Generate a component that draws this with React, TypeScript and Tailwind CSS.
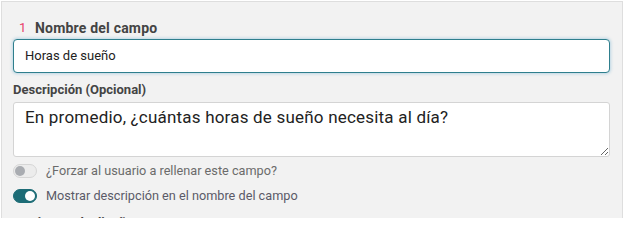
import { useState } from 'react';

function Toggle({ on }: { on: boolean }) {
  return (
    <span
      className={`relative inline-flex h-[14px] w-[24px] flex-shrink-0 items-center rounded-full border ${
        on ? 'border-[#1d6c76] bg-[#1d6c76]' : 'border-[#d6d6d6] bg-[#ececec]'
      }`}
    >
      <span
        className={`absolute top-[1px] h-[10px] w-[10px] rounded-full ${
          on ? 'right-[1px] bg-white' : 'left-[1px] bg-[#a9acb1]'
        }`}
      />
    </span>
  );
}

export default function App() {
  const [name, setName] = useState('Horas de sueño');
  const [desc, setDesc] = useState('En promedio, ¿cuántas horas de sueño necesita al día?');

  return (
    <div
      className="w-[624px] h-[218px] overflow-hidden bg-white pl-[1px] pt-[1px]"
      style={{ fontFamily: 'Roboto, "Liberation Sans", sans-serif' }}
    >
      <div className="w-[622px] h-[300px] border border-[#dedede] bg-[#f2f2f2] pl-[11px] pr-[12px] pt-[17px]">
        {/* Field name */}
        <div className="flex items-center h-[18px] text-[13px] leading-[18px]">
          <span className="w-[22px] pl-[6px] text-[#e8406a]">1</span>
          <span className="font-bold text-[14px] text-[#444444] tracking-[0.2px]">Nombre del campo</span>
        </div>
        <div className="mt-[2px] h-[34px] rounded-[4px] border border-[#2f7f8d] bg-white flex items-center px-[11px] shadow-[0_0_3px_1px_rgba(120,180,210,0.45)]">
          <input
            value={name}
            onChange={(e) => setName(e.target.value)}
            className="w-full bg-transparent outline-none text-[13px] text-[#222222]"
          />
        </div>

        {/* Description */}
        <div className="mt-[8px] h-[18px] text-[13px] leading-[18px] font-bold text-[#444444]">
          Descripción (Opcional)
        </div>
        <textarea
          value={desc}
          onChange={(e) => setDesc(e.target.value)}
          className="mt-[3px] block w-full h-[55px] rounded-[3px] border border-[#d4d4d4] bg-white px-[11px] pt-[4px] text-[17px] leading-[20px] tracking-[0.2px] text-[#222222] outline-none resize-y"
        />

        {/* Toggles */}
        <div className="mt-[7px] flex items-center gap-[9px] h-[14px]">
          <Toggle on={false} />
          <span className="text-[12.7px] text-[#6b6b6b]">¿Forzar al usuario a rellenar este campo?</span>
        </div>
        <div className="mt-[11px] flex items-center gap-[9px] h-[14px]">
          <Toggle on={true} />
          <span className="text-[12.7px] text-[#5b5a68]">Mostrar descripción en el nombre del campo</span>
        </div>

        <div className="mt-[11px] pl-[16px] text-[13px] leading-[18px] font-bold text-[#444444]">
          Ajustes de diseño
        </div>
      </div>
    </div>
  );
}
